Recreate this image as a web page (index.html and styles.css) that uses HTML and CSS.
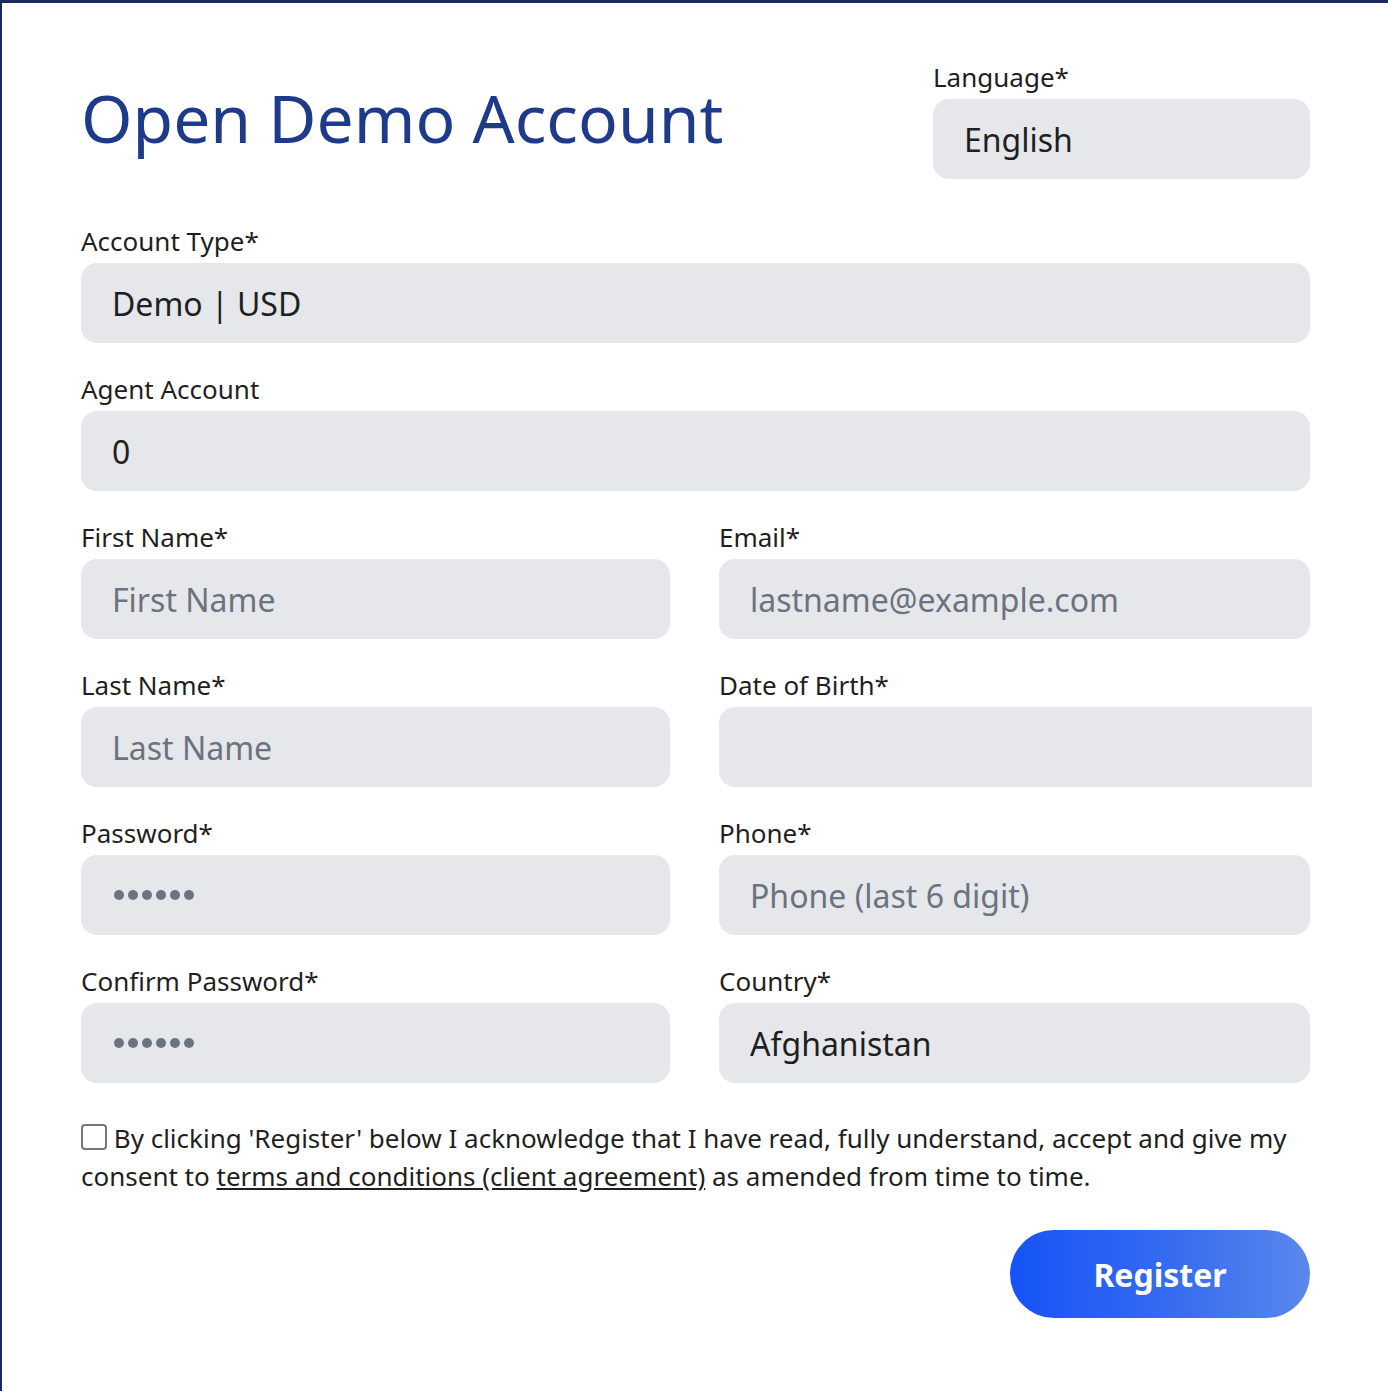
FILE: index.html
```html
<!DOCTYPE html>
<html lang="en">
<head>
<meta charset="utf-8">
<title>Open Demo Account</title>
<link rel="stylesheet" href="styles.css">
</head>
<body>
<main class="page">
  <header class="head">
    <h1 class="title">Open Demo Account</h1>
    <div class="field lang">
      <label class="label" for="lang">Language*</label>
      <select id="lang" class="control"><option>English</option></select>
    </div>
  </header>
  <form class="form">
    <div class="field wide">
      <label class="label" for="acct">Account Type*</label>
      <select id="acct" class="control"><option>Demo | USD</option></select>
    </div>
    <div class="field wide">
      <label class="label" for="agent">Agent Account</label>
      <input id="agent" class="control" type="text" value="0">
    </div>
    <div class="field">
      <label class="label" for="fn">First Name*</label>
      <input id="fn" class="control" type="text" placeholder="First Name">
    </div>
    <div class="field">
      <label class="label" for="em">Email*</label>
      <input id="em" class="control" type="text" placeholder="lastname@example.com">
    </div>
    <div class="field">
      <label class="label" for="ln">Last Name*</label>
      <input id="ln" class="control" type="text" placeholder="Last Name">
    </div>
    <div class="field">
      <label class="label" for="dob">Date of Birth*</label>
      <input id="dob" class="control date" type="text">
    </div>
    <div class="field">
      <span class="label">Password*</span>
      <div class="control dots" aria-label="password"><i></i><i></i><i></i><i></i><i></i><i></i></div>
    </div>
    <div class="field">
      <label class="label" for="ph">Phone*</label>
      <input id="ph" class="control" type="text" placeholder="Phone (last 6 digit)">
    </div>
    <div class="field">
      <span class="label">Confirm Password*</span>
      <div class="control dots" aria-label="confirm password"><i></i><i></i><i></i><i></i><i></i><i></i></div>
    </div>
    <div class="field">
      <label class="label" for="ct">Country*</label>
      <select id="ct" class="control"><option>Afghanistan</option></select>
    </div>
    <p class="agree wide"><span class="check"></span> By clicking 'Register' below I acknowledge that I have read, fully understand, accept and give my consent to <a href="#" class="link">terms and conditions (client agreement)</a> as amended from time to time.</p>
    <div class="actions wide">
      <button type="button" class="register">Register</button>
    </div>
  </form>
</main>
</body>
</html>
```
FILE: styles.css
```css
html, body {
  margin: 0;
  padding: 0;
  background: #ffffff;
}
body {
  font-family: "Noto Sans", "Open Sans", sans-serif;
  color: #1f1f1f;
  border-top: 3px solid #1b2a5c;
  border-left: 2px solid #1b2a5c;
  min-height: 1391px;
  box-sizing: border-box;
}
.page {
  width: 1229px;
  margin-left: 79px;
  padding-top: 60px;
}
.head {
  display: flex;
  justify-content: space-between;
  align-items: flex-start;
}
.title {
  margin: 14px 0 0;
  font-size: 66px;
  font-weight: 400;
  line-height: 80px;
  color: #1e3a8a;
}
.lang {
  width: 377px;
}
.field {
  display: flex;
  flex-direction: column;
  min-width: 0;
}
.label {
  font-size: 26px;
  line-height: 28px;
  margin-bottom: 8px;
  color: #1f1f1f;
}
.control {
  box-sizing: border-box;
  height: 80px;
  width: 100%;
  border: none;
  border-radius: 16px;
  background: #e5e7eb;
  padding: 0 31px;
  font-family: inherit;
  font-size: 32px;
  color: #1f1f1f;
  -webkit-appearance: none;
  appearance: none;
  outline: none;
  margin: 0;
}
.control::placeholder {
  color: #6b7280;
}
.date {
  width: calc(100% + 2px);
  border-radius: 16px 0 0 16px;
}
.dots {
  display: flex;
  align-items: center;
  gap: 4px;
  padding-left: 33px;
}
.dots i {
  display: block;
  width: 10px;
  height: 10px;
  border-radius: 50%;
  background: #6b7280;
}
.form {
  display: grid;
  grid-template-columns: 589px 1fr;
  column-gap: 49px;
  row-gap: 32px;
  margin-top: 48px;
}
.wide {
  grid-column: 1 / -1;
}
.agree {
  margin: 4px 0 0;
  font-size: 26px;
  line-height: 38px;
  color: #1f1f1f;
}
.check {
  display: inline-block;
  box-sizing: border-box;
  width: 26px;
  height: 26px;
  border: 2px solid #767676;
  border-radius: 4px;
  vertical-align: -2px;
}
.link {
  color: inherit;
  text-decoration: underline;
}
.actions {
  display: flex;
  justify-content: flex-end;
  margin-top: 3px;
}
.register {
  width: 300px;
  height: 88px;
  border: none;
  border-radius: 44px;
  background: linear-gradient(90deg, #1553f7 0%, #3a6ff0 60%, #5b88ec 100%);
  color: #ffffff;
  font-family: inherit;
  font-size: 32px;
  font-weight: 700;
  cursor: pointer;
}
```
